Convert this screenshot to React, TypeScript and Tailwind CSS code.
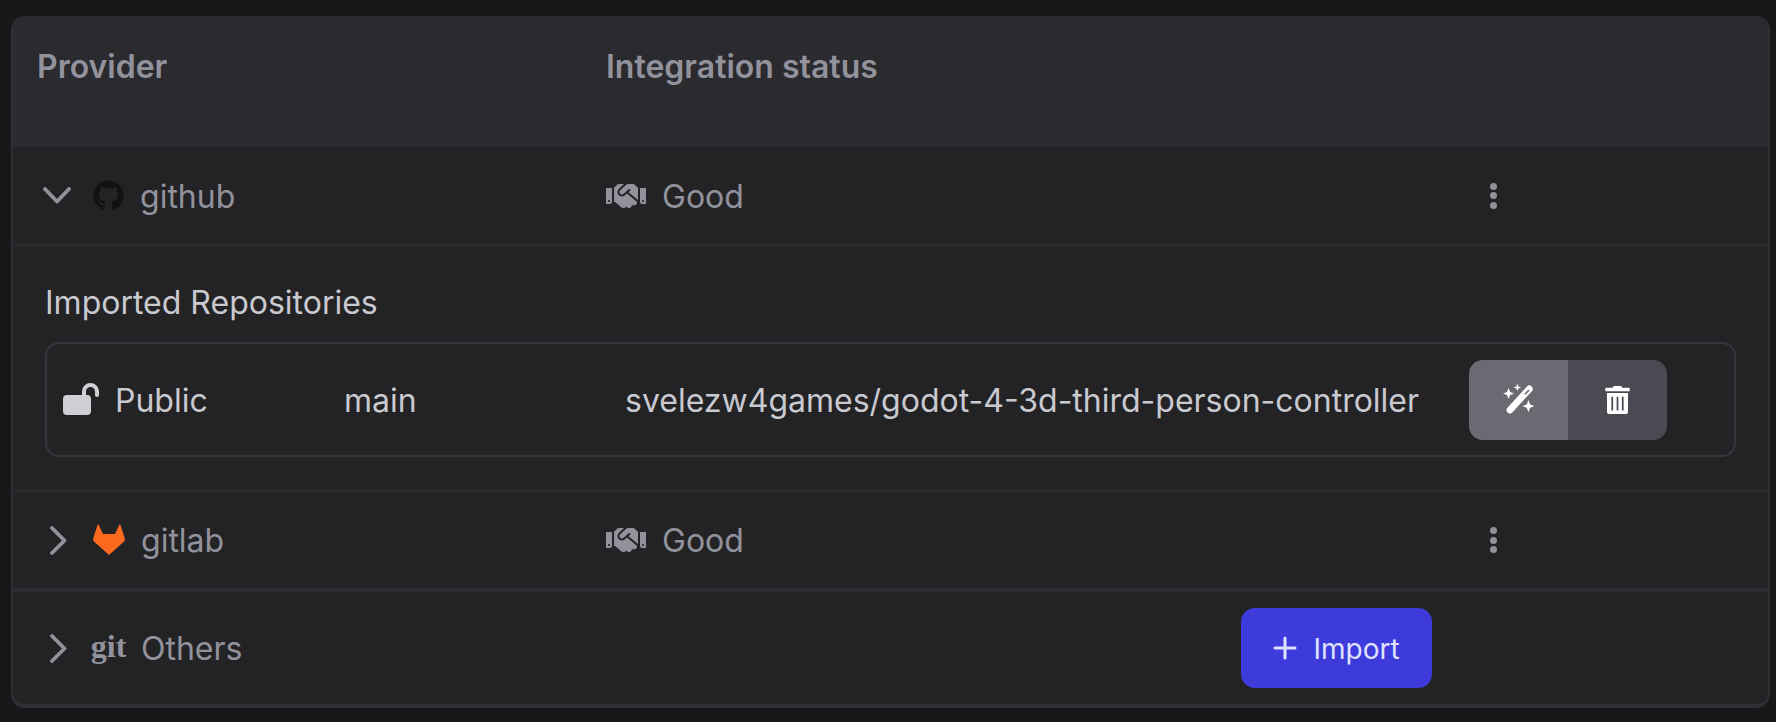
import React from 'react';
import { FaGithub, FaHandshake, FaTrashAlt } from 'react-icons/fa';

const Chevron: React.FC<{ open?: boolean }> = ({ open }) => (
  <div className="flex w-[30px] shrink-0 justify-center">
    {open ? (
      <svg width="28" height="17" viewBox="0 0 28 17" fill="none" stroke="#92929c" strokeWidth="3.8" strokeLinecap="round" strokeLinejoin="round">
        <path d="M2 2l12 12.5L26 2" />
      </svg>
    ) : (
      <svg width="17" height="29" viewBox="0 0 17 29" fill="none" stroke="#92929c" strokeWidth="3.8" strokeLinecap="round" strokeLinejoin="round" className="ml-[3px]">
        <path d="M2 2l12.5 12.5L2 27" />
      </svg>
    )}
  </div>
);

const Kebab: React.FC = () => (
  <div className="flex w-[40px] flex-col items-center gap-[2.5px]">
    <span className="h-[7px] w-[7px] rounded-full bg-[#92929c]" />
    <span className="h-[7px] w-[7px] rounded-full bg-[#92929c]" />
    <span className="h-[7px] w-[7px] rounded-full bg-[#92929c]" />
  </div>
);

const Status: React.FC = () => (
  <div className="flex w-[867px] items-center gap-[16px] text-[#92929c]">
    <FaHandshake className="h-[40px] w-[40px]" />
    <span className="pt-[2px]">Good</span>
  </div>
);

const ProviderCell: React.FC<{ open?: boolean; icon: React.ReactNode; name: string }> = ({ open, icon, name }) => (
  <div className="flex w-[593px] shrink-0 items-center pl-[29px] text-[#92929c]">
    <Chevron open={open} />
    <div className="ml-[20px] flex w-[33px] shrink-0 justify-center">{icon}</div>
    <span className={open ? 'ml-[15px] pt-[2px]' : 'ml-[16px] pt-[2px]'}>{name}</span>
  </div>
);

const UnlockIcon: React.FC = () => (
  <svg width="38" height="33" viewBox="0 0 38 33" fill="none" className="shrink-0">
    <rect x="0" y="12" width="28" height="20" rx="4" fill="#cfcfd4" />
    <path d="M21 13V8.5a6.5 6.5 0 0 1 13 0V12" stroke="#cfcfd4" strokeWidth="4" strokeLinecap="round" />
  </svg>
);

const GitlabIcon: React.FC = () => (
  <svg width="32" height="32" viewBox="0 0 32 32" fill="#fc6a1f">
    <path d="M5.5.5L10 10h12l4.500-9.500q.5-.5 1 .5l4.300 13.500q.4 2-1.300 3.500L16 31 1.500 18Q-.2 16.500.2 14.500L4.500 1q.5-1 1-.5z" />
  </svg>
);

const WandIcon: React.FC = () => (
  <svg width="33" height="33" viewBox="0 0 30 30" fill="white">
    <path fillRule="evenodd" d="M22.700 3.100a3 3 0 0 1 4.200 0l.2.2a3 3 0 0 1 0 4.200L9.400 26.900a3 3 0 0 1-4.200 0l-.2-.2a3 3 0 0 1 0-4.200L22.700 3.100zM23.600 6.400l-3.300 3.300 1 1 3.300-3.300a.7.7 0 0 0-1-1z" />
    <path d="M6 4.500l1.400 3.600 3.600 1.400-3.600 1.400L6 14.500l-1.400-3.600L1 9.500l3.600-1.400z" />
    <path d="M14 .5l.9 2.600 2.600.9-2.600.9L14 7.500l-.9-2.600-2.600-.9 2.600-.9z" />
    <path d="M24 15.500l1.500 4 4 1.500-4 1.500-1.500 4-1.500-4-4-1.500 4-1.500z" />
  </svg>
);

export default function App() {
  return (
    <div className="h-[722px] overflow-hidden bg-[#18181a] pl-[11px] pt-[16px] font-['Inter',sans-serif] text-[32px] leading-[38px]">
      <div className="h-[692px] w-[1759px] overflow-hidden rounded-[14px] border-x-2 border-b-4 border-[#2e2e33] bg-[#232325]">
        <div className="flex h-[131px] bg-[#2a2a2f] pt-[32px] font-semibold text-[#92929c]">
          <div className="w-[593px] shrink-0 pl-[24px]">Provider</div>
          <div>Integration status</div>
        </div>

        <div className="flex h-[99px] items-center border-b-2 border-[#2c2c31]">
          <ProviderCell open name="github" icon={<FaGithub className="h-[31px] w-[31px] text-[#111113]" />} />
          <Status />
          <Kebab />
        </div>

        <div className="h-[246px] border-b-2 border-[#2c2c31] pl-[32px] pt-[38px] text-[#c9c9d0]">
          <div>Imported Repositories</div>
          <div className="mt-[20px] flex h-[115px] w-[1691px] items-center rounded-[14px] border-2 border-[#35353c] pl-[16px]">
            <UnlockIcon />
            <span className="ml-[14px] w-[229px] pt-[2px]">Public</span>
            <span className="w-[281px] pt-[2px]">main</span>
            <span className="w-[844px] pt-[2px]">svelezw4games/godot-4-3d-third-person-controller</span>
            <div className="flex h-[80px] overflow-hidden rounded-[14px] text-white">
              <div className="flex w-[99px] items-center justify-center bg-[#6a6a73]">
                <WandIcon />
              </div>
              <div className="flex w-[99px] items-center justify-center bg-[#4a4a52]">
                <FaTrashAlt className="h-[28px] w-[25px]" />
              </div>
            </div>
          </div>
        </div>

        <div className="flex h-[100px] items-center border-b-4 border-[#2c2c31]">
          <ProviderCell name="gitlab" icon={<GitlabIcon />} />
          <Status />
          <Kebab />
        </div>

        <div className="flex h-[112px] items-center">
          <ProviderCell
            name="Others"
            icon={<span className="-mt-[4px] font-['Liberation_Serif',serif] text-[32px] font-bold leading-none">git</span>}
          />
          <div className="w-[635px]" />
          <button className="flex h-[80px] w-[191px] items-center justify-center gap-[16px] rounded-[14px] bg-[#3e3bdd] text-[28px] text-[#dfe2ff]">
            <svg width="24" height="24" viewBox="0 0 24 24" fill="none" stroke="#dfe2ff" strokeWidth="3" strokeLinecap="round">
              <path d="M12 2v20M2 12h20" />
            </svg>
            <span className="pt-[2px]">Import</span>
          </button>
        </div>
      </div>
    </div>
  );
}
